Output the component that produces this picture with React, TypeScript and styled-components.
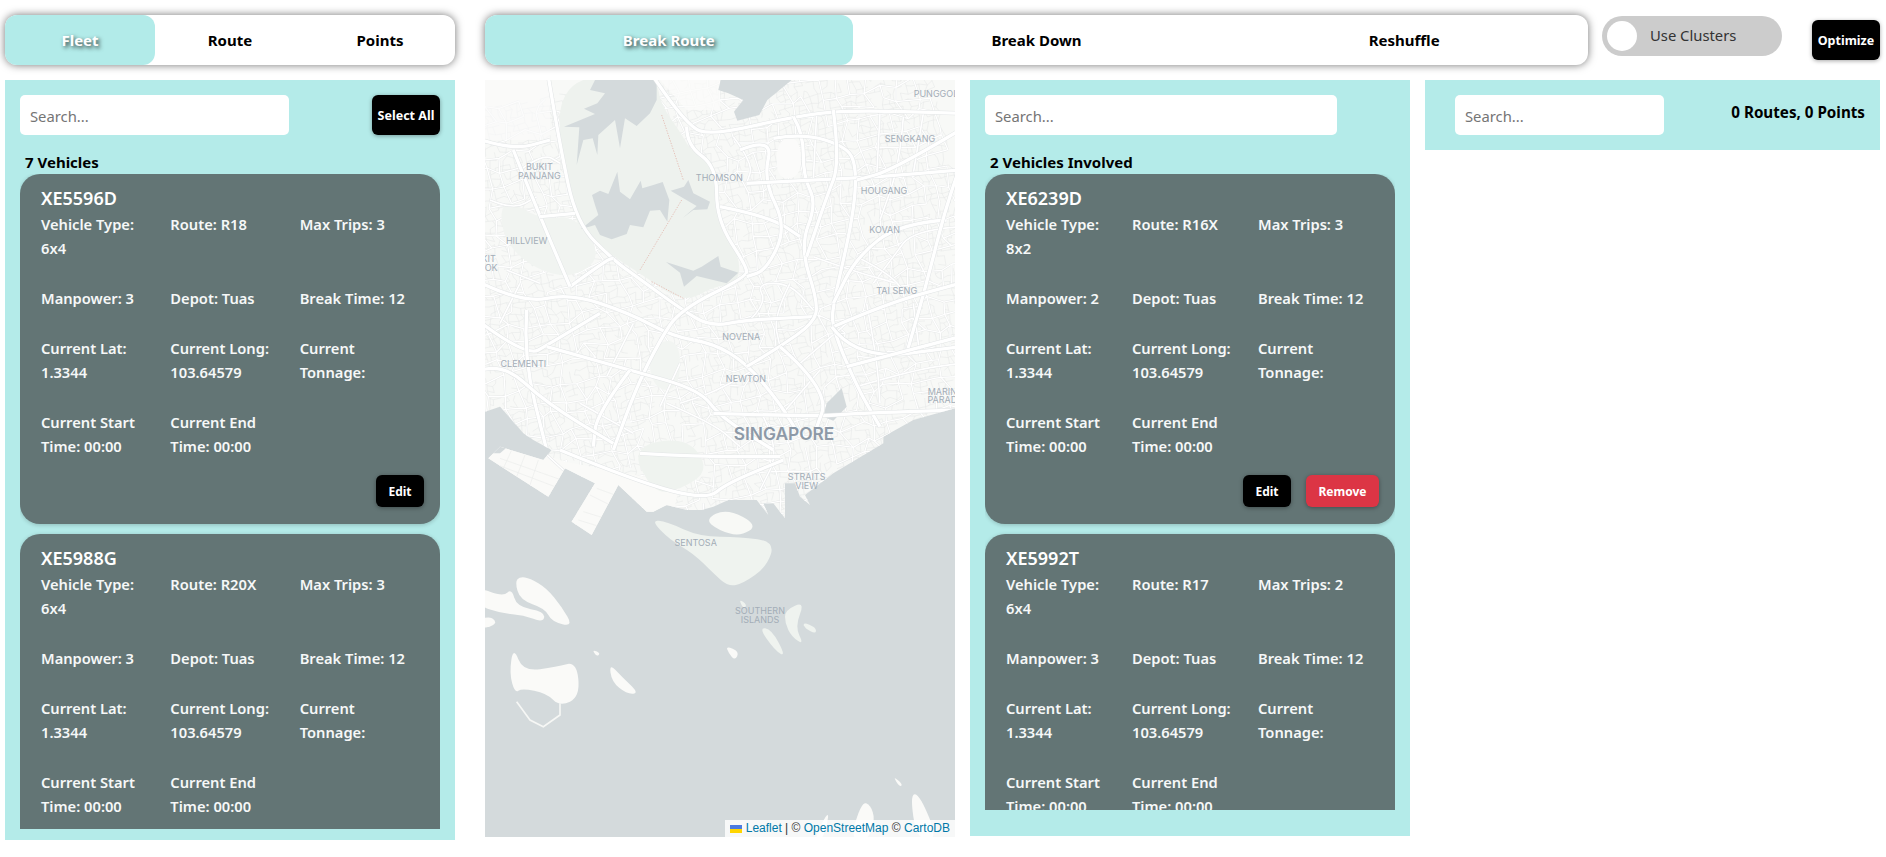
import React from 'react';
import styled, {createGlobalStyle, css} from 'styled-components';

const GlobalStyle = createGlobalStyle`
  html, body {
    margin: 0;
    padding: 0;
    background: #fff;
    overflow: hidden;
  }
  body {
    font-family: "Noto Sans", "Open Sans", sans-serif;
  }
`;

const Page = styled.div`
  width: 1886px;
  height: 857px;
  box-sizing: border-box;
  padding: 15px 6px 0 5px;
  display: flex;
  flex-direction: column;
  gap: 15px;
`;

const TopBar = styled.div`
  display: flex;
  align-items: flex-start;
  height: 50px;
`;

const TabBar = styled.div<{$width: number; $gap: number}>`
  width: ${p => p.$width}px;
  margin-right: ${p => p.$gap}px;
  height: 50px;
  display: flex;
  background: #fff;
  border-radius: 12px;
  box-shadow: 0 0 8px rgba(0, 0, 0, 0.55);
  flex-shrink: 0;
`;

const Tab = styled.div<{$active?: boolean}>`
  flex: 1 1 0;
  display: flex;
  align-items: center;
  justify-content: center;
  border-radius: 12px;
  font-size: 15px;
  font-weight: 700;
  color: #000;
  ${p => p.$active && css`
    background: #b2ebe9;
    color: #fff;
    text-shadow: 2px 2px 4px rgba(0, 0, 0, 0.75);
  `}
`;

const Toggle = styled.div`
  width: 180px;
  height: 40px;
  margin-top: 1px;
  margin-right: 30px;
  padding-left: 5px;
  box-sizing: border-box;
  background: #ccc;
  border-radius: 20px;
  display: flex;
  align-items: center;
  flex-shrink: 0;
`;

const Knob = styled.span`
  width: 30px;
  height: 30px;
  border-radius: 50%;
  background: #fff;
  margin-right: 13px;
`;

const ToggleLabel = styled.span`
  font-size: 14.8px;
  color: #333;
  margin-top: -3px;
`;

const BlackButton = styled.button`
  width: 68px;
  height: 40px;
  padding: 0;
  border: 0;
  border-radius: 6px;
  background: #000;
  color: #fff;
  font-family: inherit;
  font-size: 12.5px;
  font-weight: 700;
  box-shadow: 0 1px 4px rgba(0, 0, 0, 0.35);
  flex-shrink: 0;
`;

const OptimizeButton = styled(BlackButton)`
  margin-top: 5px;
`;

const Columns = styled.div`
  display: flex;
  align-items: flex-start;
`;

const Panel = styled.div<{$width: number; $height: number; $gap: number}>`
  width: ${p => p.$width}px;
  height: ${p => p.$height}px;
  margin-right: ${p => p.$gap}px;
  background: #b4ebe9;
  box-sizing: border-box;
  padding: 15px 15px 0;
  flex-shrink: 0;
  display: flex;
  flex-direction: column;
`;

const SearchRow = styled.div`
  display: flex;
  justify-content: space-between;
  align-items: flex-start;
  height: 40px;
`;

const SearchInput = styled.input<{$width: number; $offset?: number}>`
  width: ${p => p.$width}px;
  height: 40px;
  box-sizing: border-box;
  margin-left: ${p => p.$offset || 0}px;
  padding: 1px 10px 0;
  border: 0;
  border-radius: 5px;
  background: #fff;
  font-family: inherit;
  font-size: 14.8px;
  outline: none;
  &::placeholder {
    color: #757575;
  }
`;

const Count = styled.div`
  margin: 15px 0 0 5px;
  height: 24px;
  line-height: 24px;
  font-size: 15px;
  font-weight: 700;
  color: #000;
`;

const RightCount = styled.div`
  font-size: 15.2px;
  font-weight: 700;
  color: #000;
  line-height: 34px;
`;

const CardList = styled.div<{$height: number}>`
  height: ${p => p.$height}px;
  overflow: hidden;
  display: flex;
  flex-direction: column;
  gap: 10px;
`;

const Card = styled.div`
  flex-shrink: 0;
  height: 350px;
  box-sizing: border-box;
  border-radius: 20px;
  background: #637575;
  box-shadow: 0 1px 4px rgba(0, 0, 0, 0.2);
  padding: 10px 11px 17px 21px;
  display: flex;
  flex-direction: column;
  color: #fff;
`;

const CardTitle = styled.div`
  font-size: 18px;
  font-weight: 600;
  line-height: 28px;
`;

const CardGrid = styled.div`
  display: grid;
  grid-template-columns: repeat(3, 1fr);
  row-gap: 26px;
`;

const Field = styled.div`
  font-size: 14.7px;
  font-weight: 600;
  line-height: 24px;
  padding-right: 15px;
  color: #f6f8f8;
`;

const CardActions = styled.div`
  margin-top: auto;
  padding-right: 5px;
  display: flex;
  justify-content: flex-end;
  gap: 15px;
`;

const CardButton = styled.button<{$danger?: boolean}>`
  height: 32px;
  width: ${p => p.$danger ? 73 : 48}px;
  padding: 0;
  border: 0;
  border-radius: 6px;
  background: ${p => p.$danger ? '#dc3545' : '#000'};
  color: #fff;
  font-family: inherit;
  font-size: 12px;
  font-weight: 700;
  box-shadow: 0 1px 4px rgba(0, 0, 0, 0.35);
`;

const MapBox = styled.div`
  position: relative;
  width: 470px;
  height: 757px;
  margin-right: 15px;
  flex-shrink: 0;
  overflow: hidden;
  background: #d4dadc;
`;

const MapSvg = styled.svg`
  display: block;
  width: 470px;
  height: 757px;
`;

const Attribution = styled.div`
  position: absolute;
  right: 0;
  bottom: 0;
  height: 17px;
  line-height: 17px;
  padding: 0 5px;
  background: rgba(255, 255, 255, 0.8);
  font-family: "Liberation Sans", Arial, sans-serif;
  font-size: 12px;
  color: #333;
  display: flex;
  align-items: center;
  white-space: pre;
`;

const AttrLink = styled.span`
  color: #0078a8;
`;

const Flag = styled.svg`
  width: 12px;
  height: 8px;
  margin-right: 4px;
`;

type Vehicle = {
  id: string;
  type: string;
  route: string;
  trips: number;
  manpower: number;
};

const leftVehicles: Vehicle[] = [
  {id: 'XE5596D', type: '6x4', route: 'R18', trips: 3, manpower: 3},
  {id: 'XE5988G', type: '6x4', route: 'R20X', trips: 3, manpower: 3},
];

const midVehicles: Vehicle[] = [
  {id: 'XE6239D', type: '8x2', route: 'R16X', trips: 3, manpower: 2},
  {id: 'XE5992T', type: '6x4', route: 'R17', trips: 2, manpower: 3},
];

// point lists to curved paths, midpoints as the on-curve points
const curve = (pts: number[], closed?: boolean) => {
  const p: number[][] = [];
  for (let i = 0; i < pts.length; i += 2) p.push([pts[i], pts[i + 1]]);
  const mid = (a: number[], b: number[]) => `${(a[0] + b[0]) / 2} ${(a[1] + b[1]) / 2}`;
  if (closed) {
    let d = `M${mid(p[p.length - 1], p[0])}`;
    p.forEach((c, i) => {
      d += `Q${c[0]} ${c[1]} ${mid(c, p[(i + 1) % p.length])}`;
    });
    return d + 'Z';
  }
  let d = `M${p[0][0]} ${p[0][1]}`;
  for (let i = 1; i < p.length - 1; i++) d += `Q${p[i][0]} ${p[i][1]} ${mid(p[i], p[i + 1])}`;
  const last = p[p.length - 1];
  return d + `L${last[0]} ${last[1]}`;
};

const poly = (pts: number[]) => {
  let d = '';
  for (let i = 0; i < pts.length; i += 2) d += `${i ? 'L' : 'M'}${pts[i]} ${pts[i + 1]}`;
  return d + 'Z';
};

// street mesh, same every render
const makeStreets = (step: number, seed: number, keep: number) => {
  let s = seed;
  const rnd = () => {
    s = (s * 16807) % 2147483647;
    return s / 2147483647;
  };
  const nodes: number[][][] = [];
  for (let j = 0; j < 1500 / step; j++) {
    const row: number[][] = [];
    for (let i = 0; i < 1500 / step; i++) {
      const x = i * step + j * step * 0.22 - 160 + (rnd() - 0.5) * step * 0.7;
      const y = j * step - i * step * 0.18 + 150 + (rnd() - 0.5) * step * 0.7;
      row.push([Math.round(x), Math.round(y)]);
    }
    nodes.push(row);
  }
  let d = '';
  nodes.forEach((row, j) => row.forEach((n, i) => {
    if (row[i + 1] && rnd() < keep) d += `M${n[0]} ${n[1]}L${row[i + 1][0]} ${row[i + 1][1]}`;
    if (nodes[j + 1] && rnd() < keep) d += `M${n[0]} ${n[1]}L${nodes[j + 1][i][0]} ${nodes[j + 1][i][1]}`;
  }));
  return d;
};

const fineStreets = makeStreets(19, 4711, 0.65);
const midStreets = makeStreets(46, 991, 0.85);

const landPath = 'M0 -1100 L1440 -1100 L1425 -95 L1300 -60 L1210 -10 L1210 10 L1060 100 L975 165 L990 195 L960 170 L945 130 L915 130 L915 235 L880 190 L850 190 L865 225 L830 180 L745 180 L700 200 L665 210 L620 210 L560 195 L520 215 L500 215 L415 135 L335 285 L275 245 L345 130 L255 85 L205 170 L25 55 L60 20 L190 60 L215 30 L160 0 L130 -20 L60 -100 L0 -80 Z';

const isles = [
  [105, 425, 120, 410, 150, 415, 200, 445, 245, 500, 280, 560, 215, 545, 195, 505, 120, 480],
  [-10, 440, 70, 470, 95, 445, 110, 500, 195, 515, 190, 548, 130, 525, 65, 520, -10, 495],
  [-10, 540, 35, 528, 52, 555, -10, 568],
  [100, 620, 130, 695, 230, 680, 290, 665, 300, 770, 240, 800, 200, 760, 125, 745, 105, 760, 88, 700],
  [388, 670, 425, 710, 478, 760, 440, 762, 395, 725],
  [336, 628, 362, 640, 350, 650],
  [738, 618, 778, 635, 765, 662, 745, 638],
  [1290, 1060, 1320, 1065, 1375, 1200, 1310, 1200],
  [1145, 1085, 1172, 1095, 1185, 1140, 1165, 1200, 1110, 1200],
  [1000, 1200, 1052, 1100, 1030, 1200],
  [1238, 1008, 1268, 1032, 1260, 1042],
];

const greenIsles = [
  [512, 240, 560, 245, 660, 290, 780, 290, 885, 305, 860, 380, 790, 430, 745, 440, 700, 400, 640, 340, 570, 300],
  [836, 562, 875, 568, 918, 650, 885, 632],
  [915, 510, 975, 484, 945, 560, 972, 615, 935, 590, 915, 550],
  [968, 546, 1008, 562, 1008, 582, 975, 566],
  [776, 476, 802, 495, 790, 507],
];

const reservoirs = [
  [345, 30, 530, 30, 530, 90, 510, 130, 470, 168, 435, 145, 420, 235, 405, 150, 355, 195, 352, 255, 338, 205, 310, 210, 290, 285, 298, 172, 252, 170, 345, 132, 312, 116, 352, 100, 375, 70, 330, 60],
  [336, 375, 360, 362, 385, 372, 412, 305, 420, 365, 450, 388, 482, 332, 487, 355, 520, 345, 548, 336, 568, 390, 562, 455, 540, 420, 510, 422, 490, 472, 450, 465, 440, 492, 395, 508, 360, 495, 345, 465, 302, 478, 355, 435, 345, 405],
  [572, 362, 612, 350, 625, 330, 640, 370, 690, 395, 682, 418, 640, 420, 608, 444, 650, 408, 610, 385],
  [558, 576, 640, 602, 665, 590, 715, 558, 722, 590, 775, 608, 740, 640, 650, 618, 612, 650, 600, 608],
  [722, 30, 935, 30, 862, 90, 838, 135, 772, 152, 762, 125, 790, 90, 745, 70, 715, 60],
  [1040, 1000, 1085, 955, 1100, 1010, 1060, 1052, 1030, 1040],
  [15, 1030, 60, 1010, 130, 1090, 60, 1150, 15, 1150],
];

const majorRoads = [
  [205, 20, 240, 230, 290, 460, 400, 570, 470, 620, 600, 715, 690, 770, 800, 750, 1000, 740],
  [5, 640, 130, 700, 270, 670, 450, 730, 580, 800, 700, 820, 800, 880, 900, 1000, 960, 1100],
  [270, 650, 380, 570, 400, 565],
  [520, 20, 620, 170, 700, 195, 940, 140, 1100, 120, 1440, 130],
  [620, 170, 620, 225, 710, 290, 710, 450, 800, 590, 800, 620, 600, 720, 540, 810, 470, 950, 400, 1140],
  [940, 140, 970, 190, 970, 320, 1010, 400, 960, 530, 1015, 700, 1000, 760, 900, 830, 800, 890],
  [720, 410, 870, 440, 960, 500],
  [880, 205, 970, 190, 1100, 230, 1130, 290, 1120, 440, 1060, 700, 1055, 770, 1130, 950, 1200, 1070],
  [780, 240, 880, 200, 850, 330, 920, 470, 860, 600, 800, 620],
  [800, 340, 1000, 330, 1200, 320, 1440, 300],
  [1440, 180, 1240, 300, 1130, 330],
  [1400, 450, 1260, 460, 1130, 560, 1060, 700],
  [1440, 290, 1400, 400, 1340, 640, 1280, 850],
  [1060, 770, 1220, 700, 1440, 640],
  [1055, 770, 1130, 870, 1440, 830],
  [1100, 890, 1440, 800],
  [5, 210, 100, 240, 210, 210],
  [100, 240, 180, 440, 270, 650],
  [180, 440, 285, 430],
  [5, 760, 140, 860, 210, 820, 360, 730],
  [140, 720, 130, 860, 200, 1140],
  [200, 830, 450, 900, 660, 960, 720, 1040, 880, 1140],
  [450, 900, 350, 1030, 340, 1130],
  [700, 1030, 1000, 1040, 1130, 1030, 1440, 1020],
  [900, 830, 1050, 960, 1000, 1100],
  [5, 900, 70, 880, 200, 1000, 400, 1120],
  [1060, 120, 1080, 280, 1040, 380, 980, 560],
  [240, 1140, 470, 1235, 680, 1290, 740, 1240, 910, 1170],
  [480, 1150, 650, 1160, 900, 1160],
];

const minorRoads = [
  [670, 1300, 670, 1395],
  [15, 1050, 120, 1080, 250, 1200],
  [810, 750, 860, 700, 830, 640, 930, 640, 1000, 720],
  [1130, 950, 1300, 900, 1440, 880],
  [1440, 470, 1300, 480, 1240, 560, 1180, 640],
  [80, 600, 180, 640],
  [120, 300, 190, 250, 240, 280],
  [1270, 140, 1260, 280, 1200, 450],
  [1000, 560, 1110, 600, 1250, 640],
  [820, 900, 720, 960, 600, 1000],
  [460, 760, 380, 920],
  [850, 1040, 900, 1140, 840, 1260],
  [1000, 330, 1010, 130],
  [1200, 130, 1190, 320],
  [1330, 130, 1300, 310],
  [1130, 560, 1250, 620, 1280, 700],
  [930, 640, 880, 740, 900, 830],
  [1160, 700, 1190, 860, 1200, 1000],
  [1300, 700, 1320, 860],
  [960, 880, 1100, 760],
  [1020, 900, 900, 1040],
  [560, 1000, 700, 1060, 780, 1130],
  [300, 1000, 460, 1090],
  [30, 390, 100, 420, 170, 380],
  [60, 760, 120, 640],
  [600, 880, 540, 1010],
  [760, 200, 820, 280, 800, 340],
];

const mapLabels: {x: number; y: number; t: string}[] = [
  {x: 1368, y: 72, t: 'PUNGGOL'},
  {x: 1290, y: 208, t: 'SENGKANG'},
  {x: 178, y: 290, t: 'BUKIT'},
  {x: 178, y: 317, t: 'PANJANG'},
  {x: 718, y: 324, t: 'THOMSON'},
  {x: 1212, y: 362, t: 'HOUGANG'},
  {x: 1214, y: 481, t: 'KOVAN'},
  {x: 140, y: 512, t: 'HILLVIEW'},
  {x: 7, y: 567, t: 'BUKIT'},
  {x: 8, y: 593, t: 'BATOK'},
  {x: 1250, y: 664, t: 'TAI SENG'},
  {x: 784, y: 801, t: 'NOVENA'},
  {x: 130, y: 881, t: 'CLEMENTI'},
  {x: 798, y: 927, t: 'NEWTON'},
  {x: 1395, y: 965, t: 'MARINE'},
  {x: 1395, y: 991, t: 'PARADE'},
  {x: 980, y: 1222, t: 'STRAITS'},
  {x: 980, y: 1249, t: 'VIEW'},
  {x: 647, y: 1418, t: 'SENTOSA'},
  {x: 840, y: 1623, t: 'SOUTHERN'},
  {x: 840, y: 1650, t: 'ISLANDS'},
];

const SingaporeMap = () => (
  <MapSvg viewBox="15 30 1410 2271">
    <defs>
      <clipPath id="land-clip">
        <path d={landPath} transform="translate(0 1110)"/>
      </clipPath>
    </defs>
    <rect x="15" y="30" width="1410" height="2271" fill="#d4dadc"/>
    <g transform="translate(0 1110)">
      <path d={landPath} fill="#f8f9f7"/>
      {isles.map((p, i) => <path key={i} d={curve(p, true)} fill="#fafaf8"/>)}
      {greenIsles.map((p, i) => <path key={i} d={curve(p, true)} fill="#eff3ef"/>)}
      <path d={curve([675, 238, 740, 205, 835, 255, 780, 290, 715, 270], true)} fill="#f8f9f6"/>
      <path d="M110 785 L150 840 L190 860 L240 825 L240 790" fill="none" stroke="#f6f7f5" strokeWidth="5"/>
    </g>
    <g clipPath="url(#land-clip)" fill="none">
      <path d={fineStreets} stroke="#e4e6e6" strokeWidth="1.5"/>
      <path d={midStreets} stroke="#e6e8e8" strokeWidth="6"/>
      <path d={midStreets} stroke="#fff" strokeWidth="3.8"/>
      <path d="M15 30 H210 V210 H15 Z" fill="#fbfbfa" opacity="0.65"/>
      <path d="M540 30 H720 V120 H620 Z" fill="#fbfbfa" opacity="0.8"/>
      <path d="M0 1150 L60 1110 L255 1175 L600 1240 L560 1420 L0 1420 Z" fill="#fafaf8"/>
      <path d="M60 1165 L245 1230 M40 1180 L225 1250 M95 1140 L70 1195 M135 1155 L110 1220 M175 1170 L150 1245 M350 1255 L405 1275 M310 1325 L375 1345 M330 1275 L390 1305 M295 1350 L360 1370" stroke="#ebedec" strokeWidth="2"/>
      <path d={curve([215, 20, 530, 20, 540, 100, 610, 200, 630, 240, 710, 290, 710, 430, 780, 560, 775, 640, 700, 650, 610, 700, 480, 610, 400, 560, 360, 520, 300, 480, 270, 400], true)} fill="#eef2ee"/>
      <path d={curve([180, 450, 285, 435, 370, 560, 270, 630, 130, 580, 60, 480, 70, 380], true)} fill="#f1f4f1"/>
      <path d={curve([450, 1130, 620, 1100, 690, 1200, 600, 1260, 520, 1270], true)} fill="#eff3ef"/>
      <path d={curve([500, 830, 600, 800, 600, 960, 520, 960], true)} fill="#f2f5f2"/>
      <path d={curve([890, 210, 960, 200, 965, 320, 890, 330], true)} fill="#fbfbfa"/>
      {reservoirs.map((p, i) => <path key={i} d={poly(p)} fill="#d4dadc"/>)}
      <path d="M545 135 L610 330 M605 390 L480 600 M515 635 L610 685" stroke="#e3b9b0" strokeWidth="2.5" strokeDasharray="4 4"/>
      {minorRoads.map((p, i) => <g key={i}>
        <path d={curve(p)} stroke="#e5e7e8" strokeWidth="7.5"/>
        <path d={curve(p)} stroke="#fff" strokeWidth="5"/>
      </g>)}
      {majorRoads.map((p, i) => <g key={i}>
        <path d={curve(p)} stroke="#e2e5e6" strokeWidth="13"/>
        <path d={curve(p)} stroke="#fff" strokeWidth="10"/>
      </g>)}
    </g>
    <g fontFamily="Inter, 'Liberation Sans', sans-serif" fontSize="27" fill="#a3adb7" textAnchor="middle">
      {mapLabels.map((l, i) => <text key={i} x={l.x} y={l.y + 9}>{l.t}</text>)}
    </g>
    <text x="912" y="1110" fontFamily="Inter, 'Liberation Sans', sans-serif" fontSize="52" fontWeight="600" fill="#8d99a7" textAnchor="middle">SINGAPORE</text>
  </MapSvg>
);

const VehicleCard = ({v, removable}: {v: Vehicle; removable?: boolean}) => (
  <Card>
    <CardTitle>{v.id}</CardTitle>
    <CardGrid>
      <Field>Vehicle Type: {v.type}</Field>
      <Field>Route: {v.route}</Field>
      <Field>Max Trips: {v.trips}</Field>
      <Field>Manpower: {v.manpower}</Field>
      <Field>Depot: Tuas</Field>
      <Field>Break Time: 12</Field>
      <Field>Current Lat: 1.3344</Field>
      <Field>Current Long: 103.64579</Field>
      <Field>Current Tonnage:</Field>
      <Field>Current Start Time: 00:00</Field>
      <Field>Current End Time: 00:00</Field>
    </CardGrid>
    <CardActions>
      <CardButton>Edit</CardButton>
      {removable && <CardButton $danger>Remove</CardButton>}
    </CardActions>
  </Card>
);

export default function App() {
  return (
    <Page>
      <GlobalStyle/>
      <TopBar>
        <TabBar $width={450} $gap={30}>
          <Tab $active>Fleet</Tab>
          <Tab>Route</Tab>
          <Tab>Points</Tab>
        </TabBar>
        <TabBar $width={1103} $gap={14}>
          <Tab $active>Break Route</Tab>
          <Tab>Break Down</Tab>
          <Tab>Reshuffle</Tab>
        </TabBar>
        <Toggle>
          <Knob/>
          <ToggleLabel>Use Clusters</ToggleLabel>
        </Toggle>
        <OptimizeButton>Optimize</OptimizeButton>
      </TopBar>
      <Columns>
        <Panel $width={450} $height={760} $gap={30}>
          <SearchRow>
            <SearchInput $width={269} placeholder="Search..."/>
            <BlackButton>Select All</BlackButton>
          </SearchRow>
          <Count>7 Vehicles</Count>
          <CardList $height={655}>
            {leftVehicles.map(v => <VehicleCard key={v.id} v={v}/>)}
          </CardList>
        </Panel>
        <MapBox>
          <SingaporeMap/>
          <Attribution>
            <Flag viewBox="0 0 12 8">
              <rect width="12" height="4" fill="#4c7be1"/>
              <rect y="4" width="12" height="4" fill="#ffd500"/>
            </Flag>
            <AttrLink>Leaflet</AttrLink> | © <AttrLink>OpenStreetMap</AttrLink> © <AttrLink>CartoDB</AttrLink>
          </Attribution>
        </MapBox>
        <Panel $width={440} $height={756} $gap={15}>
          <SearchRow>
            <SearchInput $width={352} placeholder="Search..."/>
          </SearchRow>
          <Count>2 Vehicles Involved</Count>
          <CardList $height={636}>
            {midVehicles.map((v, i) => <VehicleCard key={v.id} v={v} removable={i === 0}/>)}
          </CardList>
        </Panel>
        <Panel $width={455} $height={70} $gap={0}>
          <SearchRow>
            <SearchInput $width={209} $offset={15} placeholder="Search..."/>
            <RightCount>0 Routes, 0 Points</RightCount>
          </SearchRow>
        </Panel>
      </Columns>
    </Page>
  );
}
